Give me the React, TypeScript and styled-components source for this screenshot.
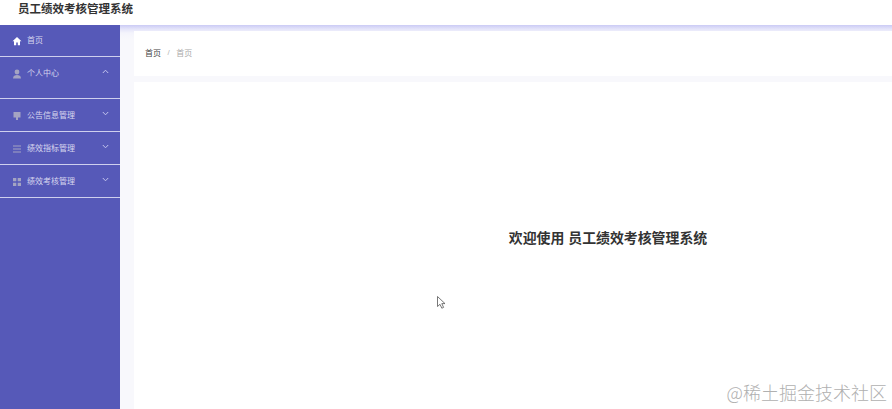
import React from "react";
import styled, { createGlobalStyle } from "styled-components";

const Global = createGlobalStyle`
  html, body { margin: 0; padding: 0; height: 100%; overflow: hidden; background: #fff; }
  body { font-family: "Liberation Sans", "Noto Sans CJK SC", sans-serif; }
`;
const Page = styled.div`
  position: relative; width: 892px; height: 409px; display: flex; flex-direction: column; overflow: hidden;
`;
const Header = styled.header`
  height: 25px; flex: none; background: #fff; box-sizing: border-box; padding: 0 0 9px 18px;
  display: flex; align-items: center;
  font-size: 11.5px; font-weight: 700; color: #333;
`;
const Body = styled.div`flex: 1; display: flex; min-height: 0;`;
const Sidebar = styled.nav`width: 120px; flex: none; background: #5659b8; display: flex; flex-direction: column;`;
const Row = styled.div<{ $h: number; $top: number }>`
  height: ${p => p.$h + 1}px; flex: none; box-sizing: border-box; border-bottom: 1px solid #cfd0ee;
  display: flex; align-items: flex-start; padding: ${p => p.$top}px 11px 0 12px; gap: 5px;
  font-size: 8px; line-height: 10px; color: #d6d6ee;
`;
const IconBox = styled.span<{ $c?: string }>`
  width: 10px; height: 10px; flex: none; display: flex; color: ${p => p.$c || "#a4a4c2"};
  svg { width: 10px; height: 10px; display: block; }
`;
const Label = styled.span`flex: 1; white-space: nowrap;`;
const Chevron = styled.svg`width: 7px; height: 5px; flex: none;`;
const Content = styled.main`
  flex: 1; min-width: 0; padding: 6px 0 0 14px; display: flex; flex-direction: column; gap: 6px;
  background: linear-gradient(#cbcbf5 0, #e4e4fa 4px, #f4f4fc 8px, #f8f8fc 14px, #f8f8fc 100%);
`;
const Crumbs = styled.div`
  height: 45px; flex: none; background: #fff; box-sizing: border-box; padding: 0 0 2px 11px;
  display: flex; align-items: center; gap: 6.5px;
  font-size: 8px; color: #444;
  b { font-weight: 400; color: #aaa; }
  i { font-style: normal; color: #b5b5b5; }
`;
const Card = styled.section`
  flex: 1; background: #fff; box-sizing: border-box; padding: 147px 0 0 190px;
  display: flex; align-items: flex-start; justify-content: center;
  font-size: 13.9px; line-height: 18px; font-weight: 700; color: #333;
`;
const Cursor = styled.svg`position: absolute; left: 437px; top: 296px; width: 9px; height: 13px;`;
const Mark = styled.div`
  position: absolute; right: 5px; top: 380px; font-size: 18px; line-height: 24px; color: #b0b0b0;
  font-family: "Noto Sans CJK SC", sans-serif; font-weight: 300; white-space: nowrap;
`;

const Up = () => <Chevron viewBox="0 0 7 5"><path d="M.8 4 3.5 1.2 6.2 4" fill="none" stroke="#c3c4ee" strokeWidth="1" /></Chevron>;
const Down = () => <Chevron viewBox="0 0 7 5"><path d="M.8 1 3.5 3.8 6.2 1" fill="none" stroke="#c3c4ee" strokeWidth="1" /></Chevron>;
const Home = () => <svg viewBox="0 0 10 10"><path d="M5 1 .5 5.2H2V9.2H4.2V6.6H5.8V9.2H8V5.2H9.5Z" fill="currentColor" /></svg>;
const User = () => <svg viewBox="0 0 10 10"><circle cx="5" cy="3" r="2.4" fill="currentColor" /><path d="M1 9.5C1 6.8 3 6 5 6s4 .8 4 3.5Z" fill="currentColor" /></svg>;
const Notice = () => <svg viewBox="0 0 10 10"><path d="M1.5 1H8.5V6.5H6V9H4V6.5H1.5Z" fill="currentColor" /></svg>;
const List = () => <svg viewBox="0 0 10 10"><path d="M1 2H9M1 5H9M1 8H9" stroke="currentColor" strokeWidth="1.1" fill="none" /></svg>;
const Grid = () => <svg viewBox="0 0 10 10"><path d="M1 1H4.3V4.3H1ZM5.7 1H9V4.3H5.7ZM1 5.7H4.3V9H1ZM5.7 5.7H9V9H5.7Z" fill="currentColor" /></svg>;

export default function App() {
  return (
    <Page>
      <Global />
      <Header>员工绩效考核管理系统</Header>
      <Body>
        <Sidebar>
          <Row $h={31} $top={11}><IconBox $c="#fff"><Home /></IconBox><Label>首页</Label></Row>
          <Row $h={41} $top={12}><IconBox><User /></IconBox><Label>个人中心</Label><Up /></Row>
          <Row $h={32} $top={12}><IconBox><Notice /></IconBox><Label>公告信息管理</Label><Down /></Row>
          <Row $h={32} $top={12}><IconBox><List /></IconBox><Label>绩效指标管理</Label><Down /></Row>
          <Row $h={32} $top={12}><IconBox><Grid /></IconBox><Label>绩效考核管理</Label><Down /></Row>
        </Sidebar>
        <Content>
          <Crumbs><span>首页</span><i>/</i><b>首页</b></Crumbs>
          <Card>欢迎使用 员工绩效考核管理系统</Card>
        </Content>
      </Body>
      <Cursor viewBox="0 0 9 13"><path d="M.5.5V10.5L3 8.3 4.8 12.2 6.6 11.4 4.8 7.6H8Z" fill="#fff" stroke="#555" strokeWidth=".8" /></Cursor>
      <Mark>@稀土掘金技术社区</Mark>
    </Page>
  );
}
